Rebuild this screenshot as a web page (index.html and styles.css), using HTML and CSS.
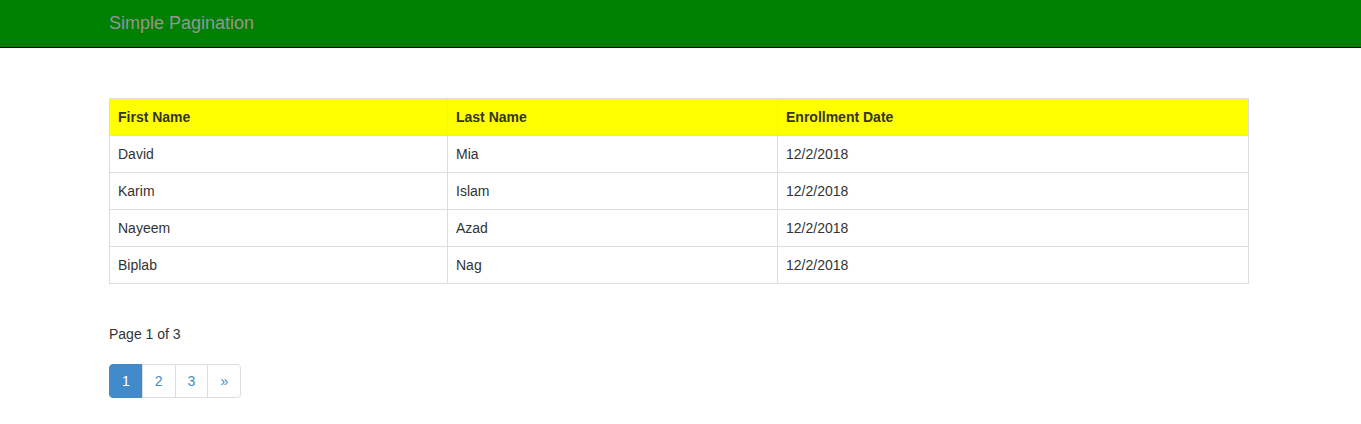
FILE: index.html
```html
<!DOCTYPE html>
<html>
<head>
<meta charset="utf-8">
<title>Simple Pagination</title>
<link rel="stylesheet" href="styles.css">
</head>
<body>
<nav class="navbar">
  <div class="container">
    <a class="brand" href="#">Simple Pagination</a>
  </div>
</nav>
<main class="container content">
  <table class="table">
    <thead>
      <tr><th class="c1">First Name</th><th class="c2">Last Name</th><th class="c3">Enrollment Date</th></tr>
    </thead>
    <tbody>
      <tr><td>David</td><td>Mia</td><td>12/2/2018</td></tr>
      <tr><td>Karim</td><td>Islam</td><td>12/2/2018</td></tr>
      <tr><td>Nayeem</td><td>Azad</td><td>12/2/2018</td></tr>
      <tr><td>Biplab</td><td>Nag</td><td>12/2/2018</td></tr>
    </tbody>
  </table>
  <p class="page-info">Page 1 of 3</p>
  <ul class="pagination">
    <li class="active"><a href="#">1</a></li>
    <li><a href="#">2</a></li>
    <li><a href="#">3</a></li>
    <li><a href="#">»</a></li>
  </ul>
</main>
</body>
</html>
```
FILE: styles.css
```css
* { box-sizing: border-box; }
html, body { margin: 0; padding: 0; }
body {
  font-family: "Liberation Sans", Arial, Helvetica, sans-serif;
  font-size: 14px;
  line-height: 20px;
  color: #333;
  background: #fff;
}
.container {
  width: 1140px;
  margin-left: 109px;
}
.navbar {
  background: #008000;
  height: 48px;
  border-bottom: 1px solid #000;
}
.brand {
  display: inline-block;
  font-size: 18px;
  line-height: 20px;
  padding: 13px 0 14px;
  color: #959595;
  text-decoration: none;
}
.content {
  padding-top: 50px;
}
.table {
  width: 1140px;
  border-collapse: collapse;
  border: 1px solid #ddd;
  margin-bottom: 40px;
}
.table th, .table td {
  padding: 8px;
  border: 1px solid #ddd;
  text-align: left;
  vertical-align: top;
  line-height: 20px;
}
.table thead th {
  background: #ffff00;
  font-weight: bold;
  border-bottom: 1px solid #ddd;
}
.c1 { width: 338px; }
.c2 { width: 330px; }
.page-info {
  margin: 0 0 20px;
}
.pagination {
  display: flex;
  list-style: none;
  margin: 0;
  padding: 0;
}
.pagination li a {
  display: block;
  padding: 6px 12px;
  line-height: 20px;
  color: #428bca;
  text-decoration: none;
  border: 1px solid #ddd;
  margin-left: -1px;
  background: #fff;
}
.pagination li:first-child a {
  margin-left: 0;
  border-radius: 4px 0 0 4px;
}
.pagination li:last-child a {
  border-radius: 0 4px 4px 0;
}
.pagination li.active a {
  background: #428bca;
  border-color: #428bca;
  color: #fff;
}
```
